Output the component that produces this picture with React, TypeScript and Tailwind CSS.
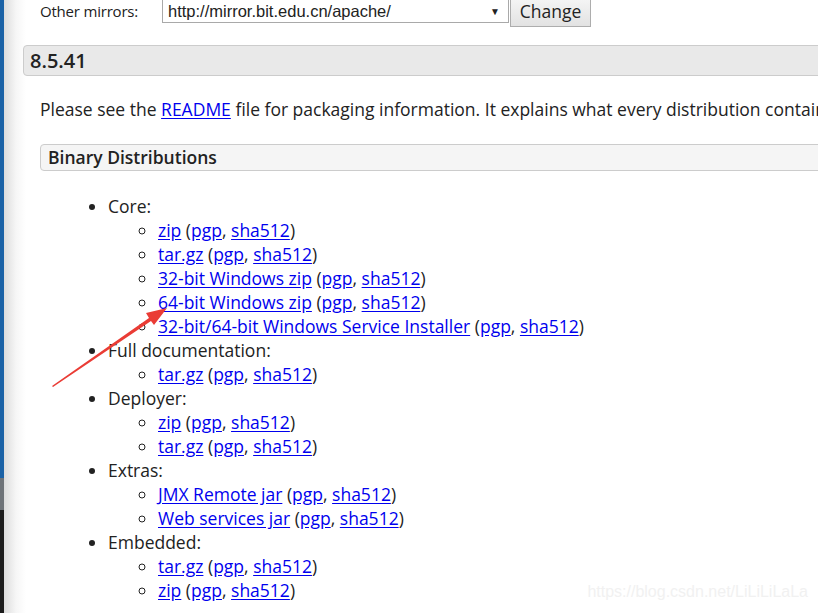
import React from 'react';

type Group = { title: string; items: string[] };

const GROUPS: Group[] = [
  {
    title: 'Core:',
    items: ['zip', 'tar.gz', '32-bit Windows zip', '64-bit Windows zip', '32-bit/64-bit Windows Service Installer'],
  },
  { title: 'Full documentation:', items: ['tar.gz'] },
  { title: 'Deployer:', items: ['zip', 'tar.gz'] },
  { title: 'Extras:', items: ['JMX Remote jar', 'Web services jar'] },
  { title: 'Embedded:', items: ['tar.gz', 'zip'] },
];

function Link({ children }: { children: React.ReactNode }) {
  return <a className="text-[#0000ee] underline underline-offset-2 cursor-pointer">{children}</a>;
}

export default function App() {
  return (
    <div
      className="relative flex w-[818px] h-[613px] overflow-hidden bg-white text-[#222]"
      style={{ fontFamily: '"Open Sans", "Noto Sans", sans-serif' }}
    >
      {/* window edge */}
      <div className="flex flex-col w-[4px] shrink-0">
        <div className="h-[478px] bg-[#1b62a6]" />
        <div className="h-[32px] bg-[#6e7378]" />
        <div className="flex-1 bg-[#1c1c1c]" />
      </div>

      <div className="flex-1 min-w-0 bg-[linear-gradient(to_right,#dcdcdc,#f6f6f6_12px,#ffffff_22px)]">
        {/* mirror selector */}
        <div className="flex items-start h-[46px] pl-[36px] -mt-[1px]">
          <span className="w-[122px] shrink-0 text-[15px] leading-[24px] tracking-[-0.2px]">Other mirrors:</span>
          <div
            className="flex items-center justify-between w-[347px] h-[24px] border border-[#a9a9a9] bg-white pl-[5px] pr-[8px] text-[16.5px]"
            style={{ fontFamily: '"Liberation Sans", Arial, sans-serif' }}
          >
            <span>http://mirror.bit.edu.cn/apache/</span>
            <span className="text-[10px]">▼</span>
          </div>
          <div className="ml-[1px] flex items-center justify-center w-[81px] h-[28px] border border-[#adadad] bg-[linear-gradient(#f4f4f4,#e2e2e2)] text-[17.5px] leading-none pb-[2px]">
            Change
          </div>
        </div>

        {/* version heading */}
        <div className="ml-[19px] w-[820px] h-[31px] border border-[#cccccc] rounded-[4px] bg-[#e9e9e9] pl-[6px] flex items-center text-[20px] font-semibold">
          8.5.41
        </div>

        <div className="pl-[36px]">
          <p className="mt-[21px] text-[17.5px] leading-[24px] whitespace-nowrap">
            Please see the <Link>README</Link> file for packaging information. It explains what every distribution contains.
          </p>

          <div className="mt-[23px] w-[820px] h-[27px] border border-[#cccccc] rounded-[4px] bg-[#f5f5f5] pl-[7px] flex items-center text-[17.5px] font-semibold">
            Binary Distributions
          </div>

          <ul className="mt-[23px] pl-[68px] list-disc text-[17.5px] leading-[24px]">
            {GROUPS.map(g => (
              <li key={g.title}>
                {g.title}
                <ul className="pl-[50px] list-[circle]">
                  {g.items.map((it, i) => (
                    <li key={it + i} className="whitespace-nowrap">
                      <Link>{it}</Link> (<Link>pgp</Link>, <Link>sha512</Link>)
                    </li>
                  ))}
                </ul>
              </li>
            ))}
          </ul>
        </div>
      </div>

      {/* annotation arrow */}
      <svg className="absolute left-0 top-0 pointer-events-none" width="818" height="613" viewBox="0 0 818 613">
        <polygon points="52,386 149,318 146,313 167,308 154,325 151,321 53,387" fill="#ea3c35" />
      </svg>

      {/* watermark */}
      <div
        className="absolute right-[10px] bottom-[9px] text-[16px] text-[#f1f1f1]"
        style={{ fontFamily: '"Liberation Sans", Arial, sans-serif' }}
      >
        https://blog.csdn.net/LiLiLiLaLa
      </div>
    </div>
  );
}
